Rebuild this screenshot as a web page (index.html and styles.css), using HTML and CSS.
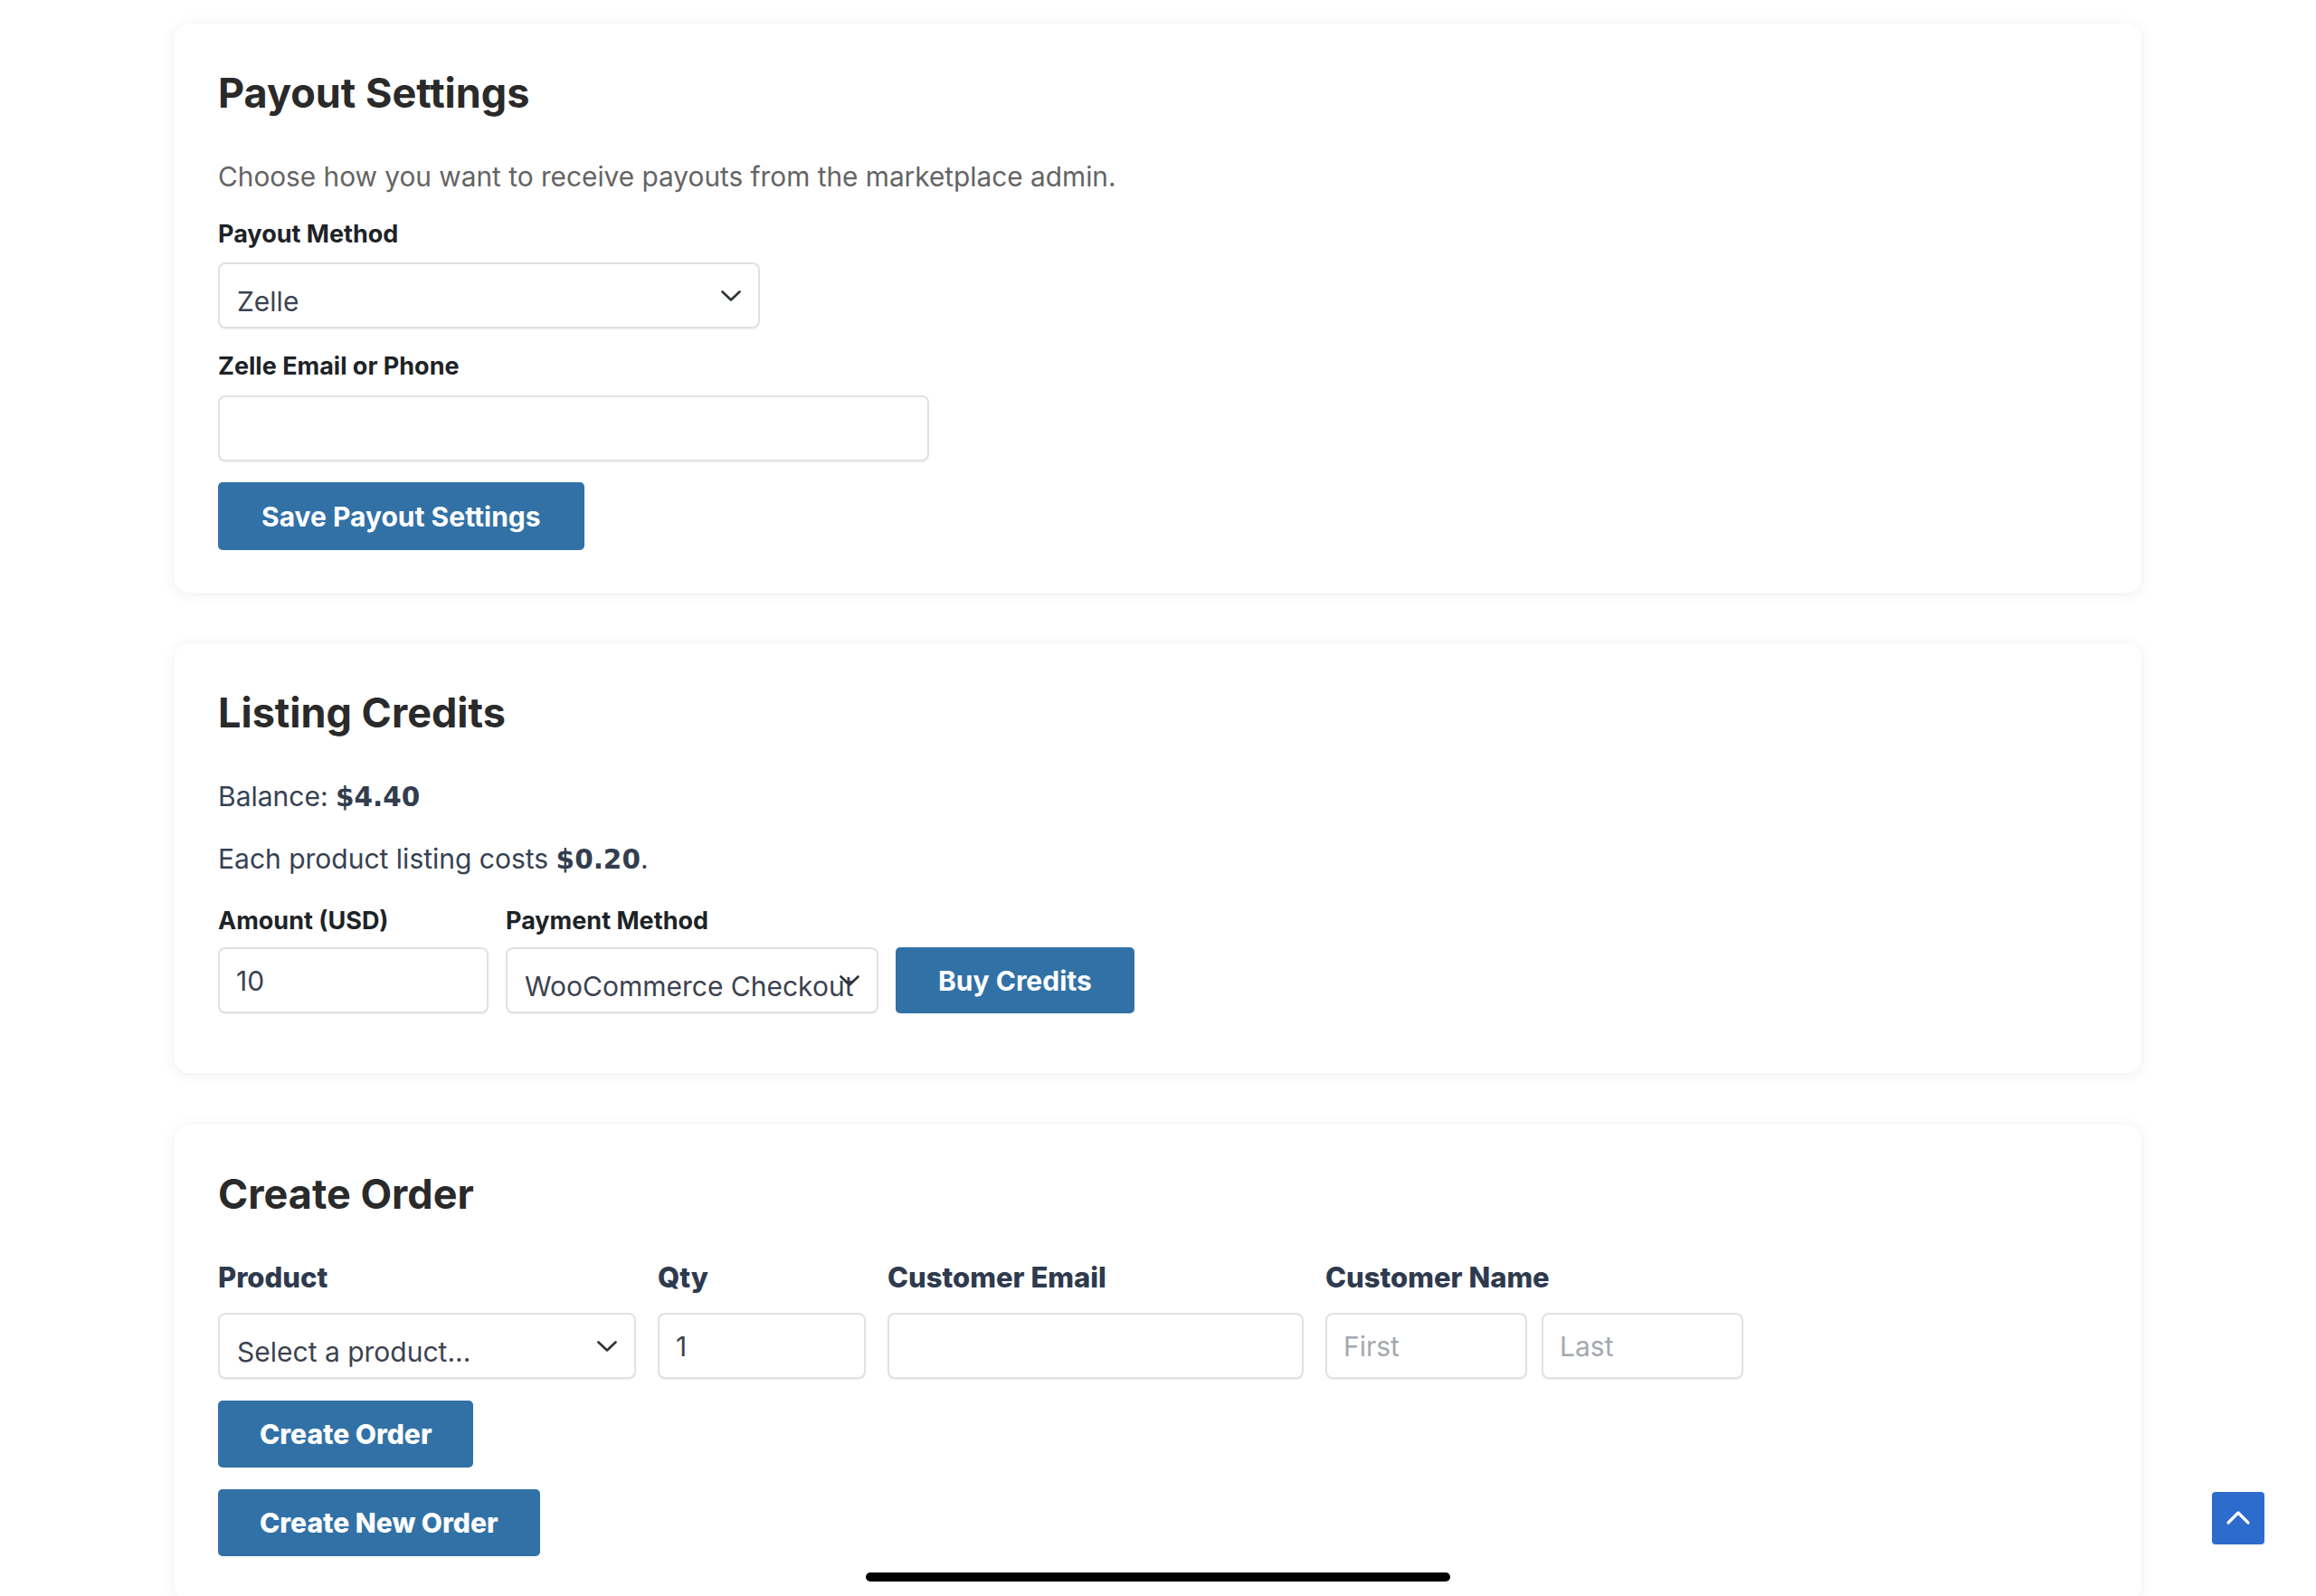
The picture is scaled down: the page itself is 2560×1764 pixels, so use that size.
FILE: index.html
```
<!DOCTYPE html>
<html lang="en">
<head>
    <meta charset="UTF-8">
    <meta name="viewport" content="width=device-width, initial-scale=1.0">
    <title>Vendor Dashboard</title>
    <link rel="stylesheet" href="styles.css">
</head>
<body>
    <div class="page">

        <!-- Payout settings -->
        <section class="card">
            <h2>Payout Settings</h2>
            <p class="intro">Choose how you want to receive payouts from the marketplace admin.</p>
            <form class="stack-form" action="#" method="POST">
                <label class="field-label" for="payout-method">Payout Method</label>
                <div class="select-wrap payout-select">
                    <select id="payout-method" name="payout_method">
                        <option>Zelle</option>
                        <option>PayPal</option>
                        <option>Bank Transfer</option>
                    </select>
                    <svg class="chevron" viewBox="0 0 22 12"><polyline points="1.5,1.5 11,10.5 20.5,1.5"/></svg>
                </div>
                <label class="field-label gap-top" for="zelle-contact">Zelle Email or Phone</label>
                <input type="text" id="zelle-contact" name="zelle_contact" class="text-input zelle-input">
                <button type="submit" class="btn save-btn">Save Payout Settings</button>
            </form>
        </section>

        <!-- Listing credits -->
        <section class="card credits-card">
            <h2>Listing Credits</h2>
            <p class="info balance">Balance: <strong>$4.40</strong></p>
            <p class="info cost">Each product listing costs <strong>$0.20</strong>.</p>
            <form class="credits-row" action="#" method="POST">
                <div class="field amount-field">
                    <label class="field-label" for="credit-amount">Amount (USD)</label>
                    <input type="number" id="credit-amount" name="amount" class="text-input" value="10">
                </div>
                <div class="field method-field">
                    <label class="field-label" for="credit-method">Payment Method</label>
                    <div class="select-wrap">
                        <select id="credit-method" name="method" class="tight-select">
                            <option>WooCommerce Checkout</option>
                        </select>
                        <svg class="chevron" viewBox="0 0 22 12"><polyline points="1.5,1.5 11,10.5 20.5,1.5"/></svg>
                    </div>
                </div>
                <button type="submit" class="btn">Buy Credits</button>
            </form>
        </section>

        <!-- Create order -->
        <section class="card order-card">
            <h2>Create Order</h2>
            <form action="#" method="POST">
                <div class="order-row">
                    <div class="field product-field">
                        <label class="order-label" for="order-product">Product</label>
                        <div class="select-wrap">
                            <select id="order-product" name="product">
                                <option>Select a product...</option>
                            </select>
                            <svg class="chevron" viewBox="0 0 22 12"><polyline points="1.5,1.5 11,10.5 20.5,1.5"/></svg>
                        </div>
                    </div>
                    <div class="field qty-field">
                        <label class="order-label" for="order-qty">Qty</label>
                        <input type="number" id="order-qty" name="qty" class="text-input" value="1">
                    </div>
                    <div class="field email-field">
                        <label class="order-label" for="order-email">Customer Email</label>
                        <input type="email" id="order-email" name="email" class="text-input">
                    </div>
                    <div class="field name-field">
                        <label class="order-label" for="order-first">Customer Name</label>
                        <div class="name-inputs">
                            <input type="text" id="order-first" name="first" class="text-input" placeholder="First">
                            <input type="text" name="last" class="text-input" placeholder="Last">
                        </div>
                    </div>
                </div>
                <button type="submit" class="btn order-btn">Create Order</button>
                <button type="button" class="btn order-btn new-order-btn">Create New Order</button>
            </form>
        </section>
    </div>

    <button class="to-top" type="button" aria-label="Back to top">
        <svg viewBox="0 0 58 58"><polyline points="18,34 29,23 40,34"/></svg>
    </button>
    <div class="home-bar"></div>
</body>
</html>
```

FILE: styles.css
```
/* Page */
body {
    margin: 0;
    background-color: #fff;
    font-family: Inter, "Noto Sans", sans-serif;
    color: #2d2d2d;
}

.page {
    width: 2174px;
    margin: 0 auto;
    padding-top: 26px;
}

.card {
    background-color: #fff;
    border-radius: 16px;
    box-shadow: 0 2px 16px rgba(0, 0, 0, 0.07);
    padding: 50px 48px 47px;
    margin-bottom: 56px;
}

.credits-card {
    padding-bottom: 66px;
    margin-bottom: 57px;
}

.order-card {
    padding-bottom: 48px;
    margin-bottom: 0;
}

h2 {
    margin: 0;
    font-size: 45px;
    line-height: 54px;
    font-weight: 700;
    color: #2a2a2a;
}

.intro {
    margin: 45px 0 0;
    font-size: 29.8px;
    line-height: 40px;
    color: #646464;
}

.info {
    margin: 0;
    font-size: 30px;
    line-height: 40px;
    color: #364152;
}

.balance {
    margin-top: 45px;
}

.cost {
    margin-top: 28px;
}

.info strong {
    font-family: "DejaVu Sans", Verdana, sans-serif;
    font-weight: 700;
    font-size: 29.5px;
    color: #323d4e;
}

/* Form fields */
.stack-form {
    display: flex;
    flex-direction: column;
    align-items: flex-start;
    margin-top: 27px;
}

.field-label {
    display: block;
    font-size: 27px;
    line-height: 34px;
    font-weight: 700;
    color: #1d2327;
}

.field-label.gap-top {
    margin-top: 25px;
}

.select-wrap {
    position: relative;
    margin-top: 14px;
}

.field .select-wrap {
    margin-top: 12px;
}

select,
.text-input {
    display: block;
    box-sizing: border-box;
    width: 100%;
    height: 73px;
    margin: 0;
    border: 2px solid #e1e1e3;
    border-radius: 8px;
    box-shadow: 0 2px 2px -1px rgba(0, 0, 0, 0.08);
    background-color: #fff;
    font-family: inherit;
    font-size: 30px;
    color: #3c4250;
    outline: none;
}

select {
    appearance: none;
    -webkit-appearance: none;
    padding: 12px 56px 0 19px;
}

select.tight-select {
    padding-right: 16px;
}

.text-input {
    padding: 0 18px;
    -moz-appearance: textfield;
}

.text-input::-webkit-outer-spin-button,
.text-input::-webkit-inner-spin-button {
    -webkit-appearance: none;
    margin: 0;
}

.text-input::placeholder {
    color: #a4a8b0;
}

.chevron {
    position: absolute;
    right: 21px;
    top: 50%;
    width: 22px;
    height: 12px;
    margin-top: -6px;
    fill: none;
    stroke: #2c3338;
    stroke-width: 2.6;
    stroke-linecap: round;
    stroke-linejoin: round;
    pointer-events: none;
}

.payout-select {
    width: 599px;
}

.zelle-input {
    width: 786px;
    margin-top: 15px;
}

/* Buttons */
.btn {
    box-sizing: border-box;
    height: 75px;
    padding: 0 46px;
    border: none;
    border-radius: 5px;
    background-color: #3171a6;
    color: #fff;
    font-family: inherit;
    font-size: 30px;
    font-weight: 700;
    cursor: pointer;
    white-space: nowrap;
}

.btn:hover {
    background-color: #285f8d;
}

.save-btn {
    margin-top: 23px;
    padding: 0 48px;
}

/* Listing credits row */
.credits-row {
    display: flex;
    align-items: flex-end;
    gap: 19px;
    margin-top: 31px;
}

.credits-row .text-input {
    margin-top: 12px;
}

.credits-row .btn {
    height: 73px;
    padding: 0 47px;
}

.amount-field {
    width: 299px;
}

.method-field {
    width: 412px;
}

/* Create order */
.order-row {
    display: flex;
    align-items: flex-start;
    gap: 24px;
    margin-top: 47px;
}

.order-label {
    display: block;
    font-size: 31px;
    line-height: 36px;
    font-weight: 800;
    color: #2e3a4e;
}

.order-row .text-input,
.order-row .select-wrap {
    margin-top: 21px;
}

.name-inputs {
    display: flex;
    gap: 16px;
}

.name-inputs .text-input {
    width: 223px;
}

.product-field {
    width: 462px;
}

.qty-field {
    width: 230px;
}

.email-field {
    width: 460px;
}

.order-btn {
    display: block;
    height: 74px;
    margin-top: 24px;
    font-weight: 800;
}

.new-order-btn {
    margin-top: 24px;
}

/* Overlays */
.to-top {
    position: fixed;
    right: 57px;
    bottom: 57px;
    width: 58px;
    height: 58px;
    padding: 0;
    border: none;
    border-radius: 4px;
    background-color: #2d6bcd;
    cursor: pointer;
}

.to-top svg {
    display: block;
    width: 58px;
    height: 58px;
    fill: none;
    stroke: #fff;
    stroke-width: 3.2;
    stroke-linecap: round;
    stroke-linejoin: round;
}

.home-bar {
    position: fixed;
    left: 50%;
    bottom: 16px;
    width: 646px;
    height: 10px;
    margin-left: -323px;
    border-radius: 5px;
    background-color: #000;
}
```
